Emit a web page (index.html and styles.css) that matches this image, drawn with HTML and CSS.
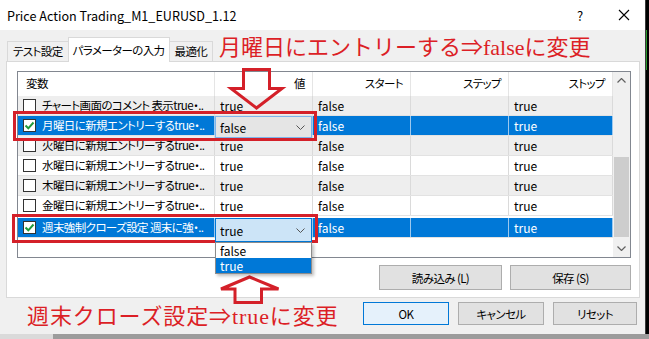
FILE: index.html
```html
<!DOCTYPE html>
<html lang="ja">
<head>
    <meta charset="UTF-8">
    <meta name="viewport" content="width=device-width, initial-scale=1.0">
    <title>Price Action Trading_M1_EURUSD_1.12</title>
    <link rel="stylesheet" href="styles.css">
</head>
<body>
<div class="screen">
    <div class="top">
        <div class="window">
            <div class="titlebar">
                <span class="title">Price Action Trading_M1_EURUSD_1.12</span>
                <span class="cap-btn help">?</span>
                <span class="cap-btn close">
                    <svg width="12" height="12" viewBox="0 0 12 12"><path d="M1 1L11 11M11 1L1 11" stroke="#000" stroke-width="1.1" fill="none"/></svg>
                </span>
            </div>

            <div class="tabs">
                <div class="tab">テスト設定</div>
                <div class="tab active">パラメーターの入力</div>
                <div class="tab">最適化</div>
            </div>

            <div class="panel">
                <div class="list">
                    <div class="list-body">
                        <div class="row head">
                            <div class="cell">変数</div>
                            <div class="cell num">値</div>
                            <div class="cell num">スタート</div>
                            <div class="cell num">ステップ</div>
                            <div class="cell num">ストップ</div>
                        </div>

                        <div class="row alt">
                            <div class="cell name"><span class="chk"></span>チャート画面のコメント 表示true・..</div>
                            <div class="cell">true</div>
                            <div class="cell">false</div>
                            <div class="cell"></div>
                            <div class="cell">true</div>
                        </div>

                        <div class="row sel">
                            <div class="cell name"><span class="chk on"><svg width="11" height="11" viewBox="0 0 11 11"><path d="M1.5 5.5L4.3 8.3L9.5 2.5" stroke="#1f9a3a" stroke-width="2" fill="none"/></svg></span>月曜日に新規エントリーするtrue・..</div>
                            <div class="cell val">
                                <div class="combo">false<svg class="chev" width="9" height="5" viewBox="0 0 9 5"><path d="M0.5 0.5L4.5 4.5L8.5 0.5" stroke="#555" fill="none"/></svg></div>
                            </div>
                            <div class="cell">false</div>
                            <div class="cell"></div>
                            <div class="cell">true</div>
                        </div>

                        <div class="row alt">
                            <div class="cell name"><span class="chk"></span>火曜日に新規エントリーするtrue・..</div>
                            <div class="cell">true</div>
                            <div class="cell">false</div>
                            <div class="cell"></div>
                            <div class="cell">true</div>
                        </div>

                        <div class="row">
                            <div class="cell name"><span class="chk"></span>水曜日に新規エントリーするtrue・..</div>
                            <div class="cell">true</div>
                            <div class="cell">false</div>
                            <div class="cell"></div>
                            <div class="cell">true</div>
                        </div>

                        <div class="row alt">
                            <div class="cell name"><span class="chk"></span>木曜日に新規エントリーするtrue・..</div>
                            <div class="cell">true</div>
                            <div class="cell">false</div>
                            <div class="cell"></div>
                            <div class="cell">true</div>
                        </div>

                        <div class="row">
                            <div class="cell name"><span class="chk"></span>金曜日に新規エントリーするtrue・..</div>
                            <div class="cell">true</div>
                            <div class="cell">false</div>
                            <div class="cell"></div>
                            <div class="cell">true</div>
                        </div>

                        <div class="row sel gap">
                            <div class="cell name"><span class="chk on"><svg width="11" height="11" viewBox="0 0 11 11"><path d="M1.5 5.5L4.3 8.3L9.5 2.5" stroke="#1f9a3a" stroke-width="2" fill="none"/></svg></span>週末強制クローズ設定 週末に強・..</div>
                            <div class="cell val">
                                <div class="combo open">true<svg class="chev" width="9" height="5" viewBox="0 0 9 5"><path d="M0.5 0.5L4.5 4.5L8.5 0.5" stroke="#555" fill="none"/></svg></div>
                                <div class="drop">
                                    <div class="opt">false</div>
                                    <div class="opt hi">true</div>
                                </div>
                            </div>
                            <div class="cell">false</div>
                            <div class="cell"></div>
                            <div class="cell">true</div>
                        </div>
                    </div>

                    <div class="scrollbar">
                        <div class="sb-btn"><svg width="9" height="5" viewBox="0 0 9 5"><path d="M0.5 4.5L4.5 0.5L8.5 4.5" stroke="#606060" stroke-width="1.2" fill="none"/></svg></div>
                        <div class="sb-track"><div class="sb-thumb"></div></div>
                        <div class="sb-btn"><svg width="9" height="5" viewBox="0 0 9 5"><path d="M0.5 0.5L4.5 4.5L8.5 0.5" stroke="#606060" stroke-width="1.2" fill="none"/></svg></div>
                    </div>
                </div>

                <div class="panel-btns">
                    <div class="btn load">読み込み (L)</div>
                    <div class="btn save">保存 (S)</div>
                </div>
            </div>

            <div class="footer">
                <div class="btn wide default">OK</div>
                <div class="btn wide">キャンセル</div>
                <div class="btn wide reset">リセット</div>
            </div>
        </div>
        <div class="desk"></div>
    </div>
    <div class="taskbar"></div>

    <!-- annotations drawn over the screenshot -->
    <svg class="marks" width="649" height="339" viewBox="0 0 649 339">
        <rect x="14.5" y="112.5" width="301" height="27"/>
        <rect x="13.5" y="215.5" width="303" height="26"/>
        <polygon points="243.5,69.5 269.5,69.5 269.5,88.5 282,88.5 256.5,108 231,88.5 243.5,88.5"/>
        <polygon points="249.5,277 278.5,289 261.5,289 261.5,302.5 235,302.5 235,289 221,289"/>
    </svg>
    <div class="note note-top">月曜日にエントリーする⇒falseに変更</div>
    <div class="note note-bottom">週末クローズ設定⇒trueに変更</div>
</div>
</body>
</html>
```

FILE: styles.css
```css
* {
    box-sizing: border-box;
}
body {
    margin: 0;
    background: #000;
    font-family: "Noto Sans CJK JP", "Noto Sans", sans-serif;
    font-size: 12px;
    font-feature-settings: "palt";
    color: #000;
}
.screen {
    position: relative;
    width: 649px;
    height: 339px;
    overflow: hidden;
}
.top {
    display: flex;
    height: 334px;
}
.window {
    width: 646px;
    height: 334px;
    background: #f0f0f0;
    border-right: 1px solid #3a3a3a;
}
.desk {
    flex: 1;
    background: linear-gradient(#000 30px, #2a9a2a 30px, #2a9a2a 70px, #000 70px) no-repeat left top / 1px 100%, #000;
}
.taskbar {
    height: 5px;
    background: linear-gradient(to right, #dadada 53px, #9c9c9c 53px);
}

/* title bar */
.titlebar {
    height: 30px;
    background: #fff;
    display: flex;
    align-items: center;
    padding-left: 7px;
}
.title {
    flex: 1;
    font-size: 12.6px;
    font-feature-settings: normal;
}
.cap-btn {
    height: 30px;
    display: flex;
    align-items: center;
    justify-content: center;
}
.help {
    width: 44px;
    font-size: 13px;
}
.close {
    width: 43px;
}

/* japanese ui text is a little tighter than the fallback font */
.tab,
.name,
.row.head .cell,
.btn {
    font-size: 11.5px;
    letter-spacing: -0.6px;
}

/* tabs */
.tabs {
    height: 31px;
    display: flex;
    align-items: flex-end;
    padding-left: 7px;
}
.tab {
    height: 20px;
    line-height: 19px;
    padding: 0 5px;
    background: #f0f0f0;
    border: 1px solid #d9d9d9;
    border-bottom: none;
}
.tab.active {
    position: relative;
    z-index: 1;
    height: 25px;
    line-height: 24px;
    margin: 0 -1px -1px;
    padding: 0 4px;
    background: #fff;
}
.panel {
    margin-left: 6px;
    width: 634px;
    height: 237px;
    background: #fff;
    border: 1px solid #d9d9d9;
    padding: 9px 8px 0 10px;
}

/* list view */
.list {
    display: flex;
    height: 187px;
    border: 1px solid #828790;
}
.list-body {
    width: 595px;
}
.row {
    display: grid;
    grid-template-columns: 197px 98px 98px 98px 104px;
    height: 20px;
    border-bottom: 1px solid #e2e2e2;
}
.row.alt {
    background: #eeeeee;
}
.row.sel {
    background: #0078d7;
    color: #fff;
}
.row.gap {
    margin-top: 2px;
}
.cell {
    padding: 0 5px;
    line-height: 19px;
    white-space: nowrap;
    overflow: hidden;
    border-right: 1px solid #dadada;
}
.row.sel .cell {
    border-right-color: #9cc8ee;
}
.row.head {
    height: 24px;
    border-bottom: none;
}
.row.head .cell {
    line-height: 23px;
    border-right-color: #e5e5e5;
    padding-left: 8px;
}
.row.head .num {
    text-align: right;
    padding-right: 7px;
}
.name {
    display: flex;
    align-items: center;
    gap: 6px;
}
.chk {
    flex: none;
    width: 13px;
    height: 13px;
    background: #fff;
    border: 1px solid #333;
    display: flex;
    align-items: center;
    justify-content: center;
}
.cell.val {
    position: relative;
    overflow: visible;
}

/* in-place combo box */
.combo {
    position: absolute;
    left: 0;
    top: 0;
    z-index: 2;
    width: 97px;
    height: 22px;
    padding: 0 6px 0 4px;
    display: flex;
    align-items: center;
    justify-content: space-between;
    color: #000;
    background: #e5e5e5;
    border: 1px solid #7eb4ea;
}
.combo.open {
    height: 24px;
    background: #cce4f7;
    border-color: #0078d7;
}
.drop {
    position: absolute;
    left: 0;
    top: 24px;
    z-index: 2;
    width: 97px;
    border: 1px solid #8c8c8c;
    background: #fff;
    box-shadow: 2px 2px 3px rgba(0, 0, 0, 0.25);
}
.opt {
    height: 15px;
    line-height: 15px;
    padding-left: 4px;
    color: #000;
}
.opt.hi {
    background: #0078d7;
    color: #fff;
}

/* scrollbar */
.scrollbar {
    width: 17px;
    display: flex;
    flex-direction: column;
    background: #f0f0f0;
}
.sb-btn {
    height: 17px;
    display: flex;
    align-items: center;
    justify-content: center;
}
.sb-track {
    flex: 1;
    padding-top: 68px;
}
.sb-thumb {
    width: 15px;
    height: 80px;
    margin-left: 1px;
    background: #cdcdcd;
}

/* buttons */
.panel-btns {
    margin-top: 7px;
    display: flex;
    justify-content: flex-end;
    gap: 8px;
}
.btn {
    height: 25px;
    display: flex;
    align-items: center;
    justify-content: center;
    background: #e1e1e1;
    border: 1px solid #adadad;
}
.load {
    width: 123px;
}
.save {
    width: 121px;
}
.footer {
    margin-top: 4px;
    display: flex;
    justify-content: flex-end;
    gap: 9px;
    padding-right: 8px;
}
.btn.wide {
    width: 86px;
    height: 23px;
}
.btn.reset {
    width: 84px;
}
.btn.default {
    background: #e5f1fb;
    border-color: #0078d7;
}

/* red annotations */
.marks {
    position: absolute;
    left: 0;
    top: 0;
    pointer-events: none;
}
.marks rect,
.marks polygon {
    fill: none;
    stroke: #d42029;
    stroke-width: 3;
}
.note {
    position: absolute;
    font-family: "Liberation Serif", "Noto Sans CJK JP", serif;
    font-feature-settings: normal;
    font-size: 22px;
    line-height: 24px;
    color: #dc1f26;
    white-space: nowrap;
}
.note-top {
    left: 219px;
    top: 36px;
}
.note-bottom {
    left: 27px;
    top: 305px;
    letter-spacing: 0.9px;
}
```
